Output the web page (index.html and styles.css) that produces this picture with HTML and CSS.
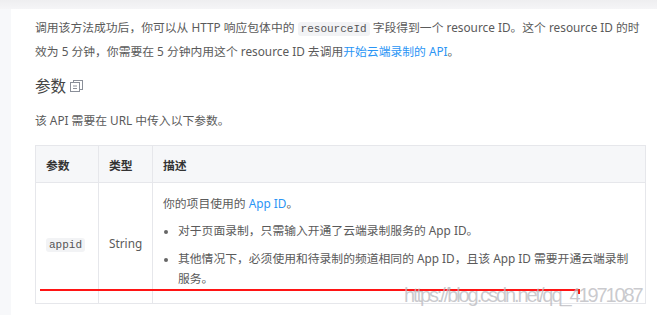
FILE: index.html
```html
<!DOCTYPE html>
<html lang="zh">
<head>
<meta charset="utf-8">
<link rel="stylesheet" href="styles.css">
</head>
<body>
<div class="topband"></div>
<div class="page">
  <aside class="side"></aside>
  <main class="main">
    <p class="para">调用该方法成功后，你可以从 HTTP 响应包体中的 <code class="code">resourceId</code> 字段得到一个 resource ID。这个 resource ID 的时效为 5 分钟，你需要在 5 分钟内用这个 resource ID 去调用<a class="link" href="#">开始云端录制的 API</a>。</p>
    <h2 class="heading">参数 <svg class="copy-icon" width="13" height="12" viewBox="0 0 13 12"><rect x="3.5" y="0.5" width="9" height="9" fill="none" stroke="#8a8f99" stroke-width="1"/><rect x="0.5" y="2.5" width="9" height="9" fill="#fff" stroke="#8a8f99" stroke-width="1"/><line x1="3" y1="6" x2="7" y2="6" stroke="#8a8f99"/><line x1="3" y1="8.5" x2="7" y2="8.5" stroke="#8a8f99"/></svg></h2>
    <p class="para">该 API 需要在 URL 中传入以下参数。</p>
    <div class="table-wrap">
      <table class="params">
        <thead>
          <tr><th class="c1">参数</th><th class="c2">类型</th><th class="c3">描述</th></tr>
        </thead>
        <tbody>
          <tr class="row">
            <td class="c1"><code class="code">appid</code></td>
            <td class="c2">String</td>
            <td class="c3 desc">
              <p class="desc-p">你的项目使用的 <a class="link" href="#">App ID</a>。</p>
              <ul class="list">
                <li>对于页面录制，只需输入开通了云端录制服务的 App ID。</li>
                <li>其他情况下，必须使用和待录制的频道相同的 App ID，且该 App ID 需要开通云端录制服务。</li>
              </ul>
            </td>
          </tr>
        </tbody>
      </table>
      <div class="redline"></div>
    </div>
  </main>
</div>
<div class="watermark">https://blog.csdn.net/qq_41971087</div>
</body>
</html>
```

FILE: styles.css
```css
html, body {
  margin: 0;
  padding: 0;
  background: #fff;
}
body {
  width: 657px;
  height: 315px;
  overflow: hidden;
  position: relative;
  font-family: "Noto Sans", "Noto Sans CJK SC", sans-serif;
  color: #5a5a5a;
  font-size: 11.8px;
}
.topband {
  height: 9px;
  background: linear-gradient(#eeeef0, #f5f5f7);
}
.page {
  display: flex;
  height: 306px;
}
.side {
  width: 11px;
  flex: none;
  background: #f7f8fa;
}
.main {
  flex: 1;
  padding: 7px 11px 0 24px;
}
.para {
  margin: 0;
  line-height: 22px;
}
.code {
  font-family: "Liberation Mono", "DejaVu Sans Mono", monospace;
  font-size: 11px;
  background: #f2f3f5;
  border-radius: 3px;
  padding: 1px 3px;
  color: #555;
}
.link {
  color: #2a95f5;
  text-decoration: none;
}
.heading {
  margin: 12px 0 11px;
  font-size: 15.5px;
  font-weight: normal;
  line-height: 24px;
  color: #444;
  display: flex;
  align-items: center;
  gap: 4px;
}
.copy-icon {
  display: block;
}
.table-wrap {
  position: relative;
  margin-top: 14px;
}
.params {
  width: 611px;
  border-collapse: collapse;
  table-layout: fixed;
}
.params th, .params td {
  border: 1px solid #e6e7eb;
  padding: 0 10px;
  text-align: left;
}
.params th {
  background: #f6f7f9;
  height: 36px;
  font-weight: bold;
  color: #333;
}
.c1 { width: 42px; }
.c2 { width: 33px; }
.row {
  height: 121px;
}
.params td {
  vertical-align: middle;
}
.params td.desc {
  padding: 10px 10px 0 10px;
  vertical-align: top;
}
.desc-p {
  margin: 0 0 7px;
  line-height: 20px;
}
.list {
  margin: 0;
  padding-left: 15px;
  line-height: 20px;
}
.list li {
  margin-bottom: 8px;
}
.list li:last-child {
  margin-bottom: 0;
}
.list li::marker {
  font-size: 10px;
  color: #666;
}
.redline {
  position: absolute;
  left: 5px;
  top: 144px;
  width: 540px;
  height: 2px;
  background: #ff1414;
}
.redline::after {
  content: "";
  position: absolute;
  right: 0;
  top: 0;
  width: 2px;
  height: 5px;
  background: #ff1414;
}
.watermark {
  position: absolute;
  left: 404px;
  top: 283px;
  font-family: "Liberation Sans", Arial, sans-serif;
  font-size: 20px;
  letter-spacing: -2.1px;
  color: rgba(185, 185, 190, 0.75);
  white-space: nowrap;
  line-height: 24px;
}
```
